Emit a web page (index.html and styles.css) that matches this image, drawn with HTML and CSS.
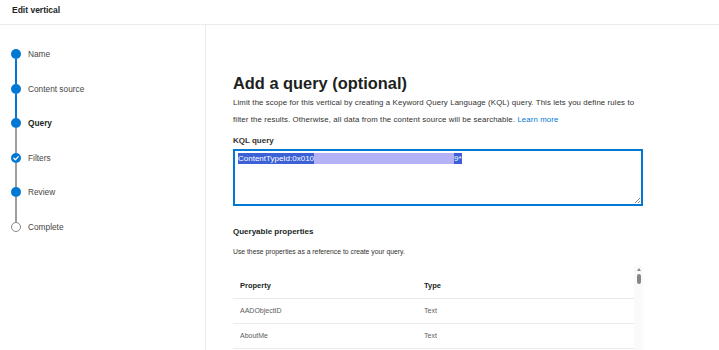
FILE: index.html
```html
<!DOCTYPE html>
<html lang="en">
<head>
    <meta charset="UTF-8">
    <meta name="viewport" content="width=device-width, initial-scale=1.0">
    <title>Edit vertical</title>
    <link rel="stylesheet" href="styles.css">
</head>
<body>
    <div class="topbar">Edit vertical</div>

    <div class="layout">
        <aside class="steps">
            <div class="step done">
                <div class="marker"><span class="dot"></span><span class="line"></span></div>
                <span class="label">Name</span>
            </div>
            <div class="step done">
                <div class="marker"><span class="dot"></span><span class="line"></span></div>
                <span class="label">Content source</span>
            </div>
            <div class="step current">
                <div class="marker"><span class="dot"></span><span class="line gray"></span></div>
                <span class="label">Query</span>
            </div>
            <div class="step done">
                <div class="marker">
                    <span class="dot check">
                        <svg viewBox="0 0 10 10" width="10" height="10"><path d="M2.8 5.2 L4.4 6.8 L7.3 3.6" fill="none" stroke="#fff" stroke-width="1.3" stroke-linecap="round" stroke-linejoin="round"/></svg>
                    </span>
                    <span class="line gray"></span>
                </div>
                <span class="label">Filters</span>
            </div>
            <div class="step done">
                <div class="marker"><span class="dot"></span><span class="line gray"></span></div>
                <span class="label">Review</span>
            </div>
            <div class="step todo">
                <div class="marker"><span class="dot"></span></div>
                <span class="label">Complete</span>
            </div>
        </aside>

        <main class="content">
            <h1>Add a query (optional)</h1>
            <p class="desc">Limit the scope for this vertical by creating a Keyword Query Language (KQL) query. This lets you define rules to filter the results. Otherwise, all data from the content source will be searchable. <a href="#">Learn more</a></p>

            <label class="field-label">KQL query</label>
            <div class="kql-box">
                <span class="sel">ContentTypeId:0x010</span><span class="sel redacted"></span><span class="sel">9*</span>
                <span class="grip"></span>
            </div>

            <h2>Queryable properties</h2>
            <p class="hint">Use these properties as a reference to create your query.</p>

            <div class="table-wrap">
                <div class="props">
                    <div class="row head"><span>Property</span><span>Type</span></div>
                    <div class="row"><span>AADObjectID</span><span>Text</span></div>
                    <div class="row"><span>AboutMe</span><span>Text</span></div>
                </div>
                <div class="scrollbar">
                    <span class="arrow"></span>
                    <span class="thumb"></span>
                </div>
            </div>
        </main>
    </div>
</body>
</html>
```

FILE: styles.css
```css
:root {
    --blue: #0078d4;
    --text: #323130;
    --muted: #605e5c;
    --border: #edebe9;
}

* {
    margin: 0;
    padding: 0;
    box-sizing: border-box;
}

body {
    font-family: 'Liberation Sans', Arial, sans-serif;
    color: var(--text);
    background: #fff;
    width: 719px;
    height: 350px;
    overflow: hidden;
}

.topbar {
    height: 25px;
    padding: 5px 0 0 12px;
    font-size: 8.5px;
    font-weight: bold;
    color: #201f1e;
    border-bottom: 1px solid var(--border);
}

.layout {
    display: flex;
    height: 325px;
}

/* stepper */
.steps {
    width: 206px;
    border-right: 1px solid var(--border);
    padding: 24px 0 0 11px;
}

.step {
    display: flex;
    align-items: flex-start;
    gap: 7px;
}

.marker {
    display: flex;
    flex-direction: column;
    align-items: center;
    width: 10px;
}

.dot {
    width: 10px;
    height: 10px;
    border-radius: 50%;
    background: var(--blue);
    display: flex;
}

.todo .dot {
    background: #fff;
    border: 1px solid #8a8886;
}

.line {
    width: 1.5px;
    height: 24.5px;
    background: var(--blue);
}

.line.gray {
    background: #a19f9d;
}

.label {
    font-size: 8.3px;
    line-height: 10px;
    color: #484644;
}

.current .label {
    font-weight: bold;
    color: #201f1e;
}

/* main */
.content {
    flex: 1;
    padding: 47px 0 0 27px;
}

h1 {
    font-size: 16.4px;
    font-weight: bold;
    color: #201f1e;
    line-height: 22px;
    margin-bottom: 0;
}

.desc {
    font-size: 7.8px;
    letter-spacing: 0.12px;
    line-height: 17px;
    width: 412px;
    margin-bottom: 7px;
}

.desc a {
    color: var(--blue);
    text-decoration: none;
}

.field-label {
    display: block;
    font-size: 8px;
    font-weight: bold;
    line-height: 12px;
    margin-bottom: 2px;
}

.kql-box {
    position: relative;
    width: 410px;
    height: 57px;
    border: 2px solid var(--blue);
    padding: 2px 3px;
    font-size: 8px;
    line-height: 10px;
    display: flex;
    align-items: flex-start;
}

.sel {
    background: #3c61d7;
    color: #fff;
    padding: 0.5px 0;
}

.sel.redacted {
    background: #b4b1f6;
    width: 140px;
    height: 11px;
}

.grip {
    position: absolute;
    right: 1px;
    bottom: 1px;
    width: 5px;
    height: 5px;
    background: linear-gradient(135deg, transparent 45%, #8a8886 45%, #8a8886 55%, transparent 55%, transparent 75%, #8a8886 75%, #8a8886 85%, transparent 85%);
}

h2 {
    font-size: 8px;
    font-weight: bold;
    color: #201f1e;
    margin-top: 20px;
    line-height: 12px;
}

.hint {
    font-size: 6.8px;
    line-height: 10px;
    margin-top: 9px;
}

.table-wrap {
    display: flex;
    margin-top: 9px;
}

.props {
    width: 401px;
    line-height: 10px;
}

.row {
    display: grid;
    grid-template-columns: 184px 1fr;
    align-items: center;
    height: 25px;
    padding-left: 7px;
    border-bottom: 1px solid var(--border);
    font-size: 7px;
    color: var(--muted);
}

.row.head {
    height: 33px;
    padding-top: 7px;
    font-size: 7.5px;
    font-weight: bold;
    color: #201f1e;
}

.scrollbar {
    width: 9px;
    height: 90px;
    background: #fafafa;
    display: flex;
    flex-direction: column;
    align-items: center;
    padding-top: 2px;
}

.arrow {
    width: 0;
    height: 0;
    border-left: 2.5px solid transparent;
    border-right: 2.5px solid transparent;
    border-bottom: 3px solid #8a8886;
}

.thumb {
    width: 4px;
    height: 10px;
    border-radius: 2px;
    background: #868686;
    margin-top: 3px;
}
```
